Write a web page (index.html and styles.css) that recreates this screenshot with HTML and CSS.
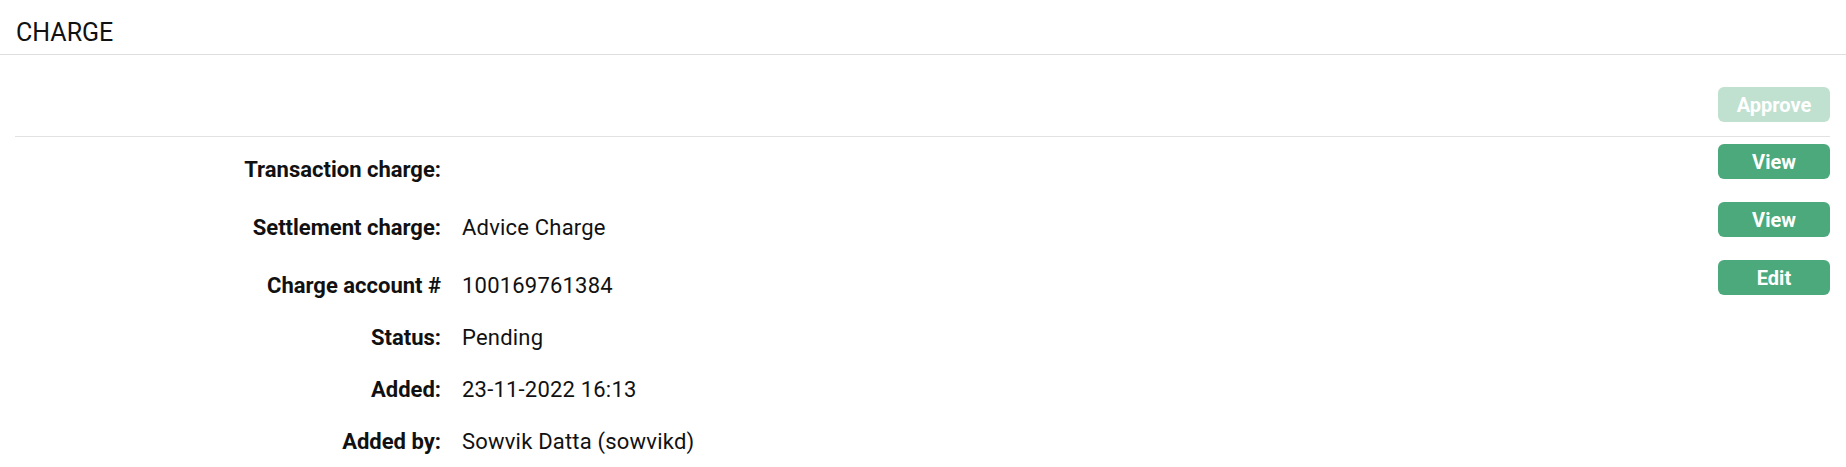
FILE: index.html
```html
<!DOCTYPE html>
<html lang="en">
<head>
<meta charset="utf-8">
<title>Charge</title>
<link rel="stylesheet" href="styles.css">
</head>
<body>
  <header class="header">
    <h1 class="title">CHARGE</h1>
  </header>
  <section class="panel">
    <div class="toolbar">
      <button class="btn btn-disabled" type="button" disabled>Approve</button>
    </div>
    <div class="rows">
      <div class="row row-tall">
        <div class="label">Transaction charge:</div>
        <div class="value"></div>
        <button class="btn" type="button">View</button>
      </div>
      <div class="row row-tall">
        <div class="label">Settlement charge:</div>
        <div class="value">Advice Charge</div>
        <button class="btn" type="button">View</button>
      </div>
      <div class="row">
        <div class="label">Charge account #</div>
        <div class="value">100169761384</div>
        <button class="btn" type="button">Edit</button>
      </div>
      <div class="row">
        <div class="label">Status:</div>
        <div class="value">Pending</div>
      </div>
      <div class="row">
        <div class="label">Added:</div>
        <div class="value">23-11-2022 16:13</div>
      </div>
      <div class="row">
        <div class="label">Added by:</div>
        <div class="value">Sowvik Datta (sowvikd)</div>
      </div>
    </div>
  </section>
</body>
</html>
```
FILE: styles.css
```css
* {
  box-sizing: border-box;
}

html, body {
  margin: 0;
  padding: 0;
  background: #ffffff;
}

body {
  font-family: Roboto, "Liberation Sans", sans-serif;
  color: #111111;
}

.header {
  height: 55px;
  padding: 18px 16px 0 16px;
  border-bottom: 1px solid #dedede;
}

.title {
  margin: 0;
  font-size: 25px;
  line-height: 1.2;
  font-weight: 400;
  color: #111111;
}

.panel {
  padding: 0 16px 0 15px;
}

.toolbar {
  display: flex;
  justify-content: flex-end;
  padding: 32px 0 14px 0;
  border-bottom: 1px solid #e2e2e2;
}

.btn {
  width: 112px;
  height: 35px;
  display: flex;
  align-items: center;
  justify-content: center;
  border: 0;
  border-radius: 6px;
  background: #4ca97c;
  color: #ffffff;
  font-family: Roboto, "Liberation Sans", sans-serif;
  font-size: 20px;
  font-weight: 700;
  padding: 0;
  cursor: pointer;
}

.btn-disabled {
  opacity: 0.35;
  cursor: default;
}

.rows {
  padding-top: 7px;
}

.row {
  display: flex;
  align-items: flex-start;
  padding-bottom: 10px;
}

.row-tall {
  padding-bottom: 16px;
}

.label,
.value {
  padding-top: 9px;
  font-size: 22px;
  line-height: 33px;
  min-height: 42px;
}

.label {
  width: 426px;
  flex: none;
  text-align: right;
  font-weight: 700;
  color: #111111;
}

.value {
  flex: 1;
  padding-left: 21px;
  font-weight: 400;
  color: #111111;
  letter-spacing: 0.2px;
}

.row .btn {
  flex: none;
}
```
